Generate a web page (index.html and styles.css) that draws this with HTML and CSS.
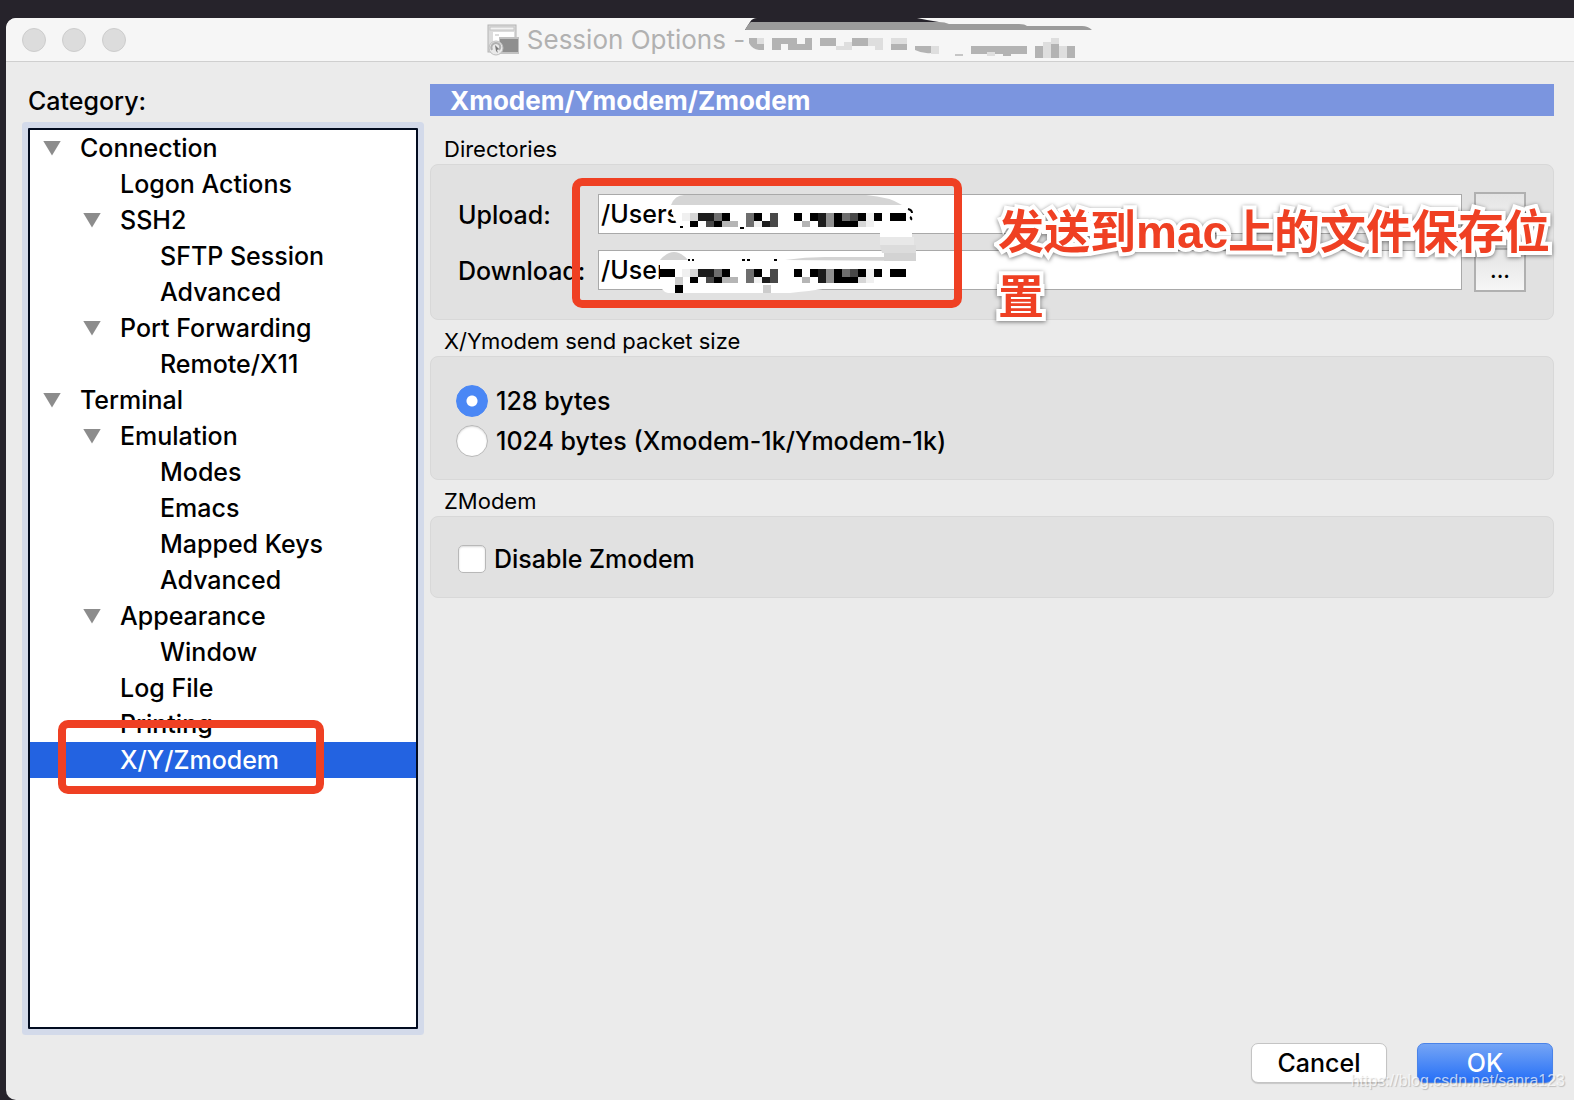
FILE: index.html
```html
<!DOCTYPE html>
<html lang="en">
<head>
    <meta charset="UTF-8">
    <meta name="viewport" content="width=device-width, initial-scale=1.0">
    <title>Session Options</title>
    <link rel="stylesheet" href="styles.css">
</head>
<body>
    <div class="window">
        <!-- Title bar -->
        <header class="titlebar">
            <div class="lights">
                <button class="light" type="button" aria-label="Close"></button>
                <button class="light" type="button" aria-label="Minimize"></button>
                <button class="light" type="button" aria-label="Zoom"></button>
            </div>
            <div class="title">
                <svg class="title-icon" viewBox="0 0 32 32" width="32" height="32">
                    <rect x="1" y="1" width="28" height="27" fill="#dcdcdc" stroke="#b4b4b4"/>
                    <rect x="3" y="3" width="24" height="3" fill="#f2f2f2" stroke="#c4c4c4"/>
                    <path d="M6 8h21v6H12v6H6z" fill="#fff"/>
                    <path d="M8 11h4" stroke="#bbb" stroke-width="1"/>
                    <rect x="12" y="13" width="20" height="17" fill="#c2c2c2"/>
                    <rect x="13" y="15" width="18" height="13" fill="#8f8f8f"/>
                    <circle cx="9" cy="24" r="7" fill="#e9e9e9" stroke="#bdbdbd"/>
                    <path d="M5 26c-2-4 1-7 4-7s6 3 3 7" fill="none" stroke="#b0b0b0" stroke-width="2"/>
                    <path d="M8 21l4 4-2 1 1 3-2-2z" fill="#777"/>
                </svg>
                <h1>Session Options -</h1>
                <svg class="title-mask" viewBox="0 0 350 44" width="350" height="44">
                    <path d="M5 4C7 1 9 0 12 0h160l10 2 12 2-40 8H0z" fill="#26232b"/>
                    <path d="M0 12Q3 6 6 4h188q6 0 10 2h70q6 0 8 2h55q6 0 10 4z" fill="#9b9b9b"/>
                    <g fill="#b3b3b3">
                        <path d="M4 20h15v12h-5q-7-1-10-7zM27 20h25v6h8v-6h7v12H43v-6h-7v6h-9zM75 20h16v8H75zM107 20h16v8h-16zM146 24h16v8h-16zM170 28h16v7q-8 1-16-3zM226 28h56v8h-16v2h-8v-2h-32zM290 28h8v12h-8zM306 24h8v16h-8zM322 28h8v12h-8z"/>
                    </g>
                    <path d="M210 36h8v2h-8z" fill="#c6c6c6"/>
                    <path d="M12 20h7v6h-7zM91 28h8v4h-8zM130 20h8v12h-8zM146 20h8v6h-8zM154 20h8v6h-8zM123 20h8v8h-8zM99 24h8v8h-8zM186 28h8v8h-8zM298 24h8v16h-8zM306 20h8v6h-8zM314 28h8v12h-8zM242 34h8v4h-8z" fill="#dedede"/>
                </svg>
            </div>
        </header>

        <main class="content">
            <!-- Category tree -->
            <nav class="sidebar">
                <h2>Category:</h2>
                <ul class="tree">
                    <li class="level-1 open"><a href="#">Connection</a></li>
                    <li class="level-2"><a href="#">Logon Actions</a></li>
                    <li class="level-2 open"><a href="#">SSH2</a></li>
                    <li class="level-3"><a href="#">SFTP Session</a></li>
                    <li class="level-3"><a href="#">Advanced</a></li>
                    <li class="level-2 open"><a href="#">Port Forwarding</a></li>
                    <li class="level-3"><a href="#">Remote/X11</a></li>
                    <li class="level-1 open"><a href="#">Terminal</a></li>
                    <li class="level-2 open"><a href="#">Emulation</a></li>
                    <li class="level-3"><a href="#">Modes</a></li>
                    <li class="level-3"><a href="#">Emacs</a></li>
                    <li class="level-3"><a href="#">Mapped Keys</a></li>
                    <li class="level-3"><a href="#">Advanced</a></li>
                    <li class="level-2 open"><a href="#">Appearance</a></li>
                    <li class="level-3"><a href="#">Window</a></li>
                    <li class="level-2"><a href="#">Log File</a></li>
                    <li class="level-2"><a href="#">Printing</a></li>
                    <li class="level-2 selected"><a href="#">X/Y/Zmodem</a><span class="mark mark-item"></span></li>
                </ul>
            </nav>

            <!-- Settings -->
            <form class="settings">
                <h2 class="banner">Xmodem/Ymodem/Zmodem</h2>

                <fieldset>
                    <legend>Directories</legend>
                    <div class="group directories">
                        <label for="upload">Upload:</label>
                        <input class="path" id="upload" type="text" value="/Users">
                        <button class="browse" type="button" aria-label="Browse upload folder">...</button>
                        <label for="download">Download:</label>
                        <input class="path" id="download" type="text" value="/User">
                        <button class="browse" type="button" aria-label="Browse download folder">...</button>

                        <svg class="path-mask" viewBox="0 0 260 100" width="260" height="100">
                            <path d="M11 12Q15 2 24 2h182q24 2 36 11v22H24Q13 32 11 12z" fill="#fff"/>
                            <path d="M11 12Q15 2 24 2h182q24 2 36 10z" fill="#d5d5d5"/>
                            <path d="M248 16q4 1 4 4M250 24q2 1 1 3" fill="none" stroke="#000" stroke-width="2"/>
                            <path d="M220 36h32v8h-32z" fill="#fff"/>
                            <path d="M220 44h34v8h-34z" fill="#e8e8e8"/>
                            <path d="M220 52h36v8h-34z" fill="#dcdcdc"/>
                            <path d="M224 60h32v8h-32z" fill="#d3d3d3"/>
                            <path d="M0 68h248v16q-88 13-118 16H8q-8-2-8-12z" fill="#fff"/>
                            <path d="M0 67q14-16 28 0zM125 67q20-3 40-3h91v4z" fill="#d3d3d3"/>
                            <path d="M28 66h2v2h-2zM32 66h2v2h-2zM82 66h3v2h-3zM87 66h3v2h-3zM114 66h3v2h-3zM80 34h4v2h-4zM20 33h3v2h-3z"/>
                            <g id="mosaic">
                                <path d="M62 20h8v8h-8zM30 28h8v6h-8zM54 28h8v6h-8zM94 20h8v8h-8zM134 20h8v8h-8zM150 20h8v8h-8zM174 20h8v14h-8zM182 28h16v6h-16zM198 20h8v8h-8zM214 20h8v8h-8zM230 20h16v8h-16z"/>
                                <path d="M38 20h16v8H38zM102 28h8v6h-8zM158 20h8v14h-8z" fill="#1c1c1c"/>
                                <path d="M46 28h8v6h-8zM110 20h8v14h-8zM190 20h8v8h-8z" fill="#484848"/>
                                <path d="M54 20h8v8h-8zM86 20h8v14h-8zM182 20h8v8h-8z" fill="#6e6e6e"/>
                                <path d="M166 20h8v14h-8z" fill="#909090"/>
                                <path d="M62 28h16v6H62zM142 28h8v6h-8z" fill="#b5b5b5"/>
                                <path d="M30 20h8v8h-8zM198 28h8v6h-8z" fill="#d6d6d6"/>
                                <path d="M22 20h8v8h-8zM94 28h8v6h-8zM206 20h8v14h-8z" fill="#f0f0f0"/>
                            </g>
                            <use href="#mosaic" y="56"/>
                            <path d="M0 76h15v8H0zM15 92h8v8h-8z"/>
                            <path d="M15 84h8v8h-8zM103 92h8v8h-8z" fill="#ccc"/>
                        </svg>
                        <span class="mark mark-paths"></span>
                        <p class="note" lang="zh-CN">发送到mac上的文件保存位置</p>
                    </div>
                </fieldset>

                <fieldset>
                    <legend>X/Ymodem send packet size</legend>
                    <div class="group packet">
                        <label class="choice"><input type="radio" name="packet" checked>128 bytes</label>
                        <label class="choice"><input type="radio" name="packet">1024 bytes (Xmodem-1k/Ymodem-1k)</label>
                    </div>
                </fieldset>

                <fieldset>
                    <legend>ZModem</legend>
                    <div class="group zmodem">
                        <label class="choice"><input type="checkbox">Disable Zmodem</label>
                    </div>
                </fieldset>
            </form>
        </main>

        <footer class="actions">
            <button class="button" type="button">Cancel</button>
            <button class="button primary" type="button">OK</button>
            <span class="watermark">https://blog.csdn.net/sanra123</span>
        </footer>
    </div>
</body>
</html>
```
FILE: styles.css
```css
* {
    box-sizing: border-box;
}

body {
    margin: 0;
    min-height: 100vh;
    display: flex;
    padding: 18px 0 0 6px;
    background: #26232b;
    color: #000;
    font-family: Inter, "Noto Sans CJK SC", sans-serif;
    font-size: 25px;
    font-weight: 500;
}

h1, h2, p, ul {
    margin: 0;
    padding: 0;
}

button, input {
    font: inherit;
    margin: 0;
}

.window {
    flex: 1;
    display: flex;
    flex-direction: column;
    background: #ebebeb;
    border-radius: 10px 0 0 10px;
}

/* Title bar */
.titlebar {
    display: flex;
    align-items: center;
    height: 44px;
    padding-left: 16px;
    background: #f6f6f6;
    border-bottom: 1px solid #cfcfcf;
    border-radius: 10px 0 0 0;
}

.lights {
    display: flex;
    gap: 16px;
}

.light {
    width: 24px;
    height: 24px;
    padding: 0;
    border: 1px solid #cdcdcd;
    border-radius: 50%;
    background: #dcdcdc;
}

.title {
    flex: 1;
    display: flex;
    align-items: center;
    justify-content: center;
    padding-right: 118px;
}

.title h1 {
    margin-left: 8px;
    color: #b1b1b1;
    font-size: 26px;
    font-weight: 400;
    line-height: 44px;
    white-space: nowrap;
}

/* Main area */
.content {
    flex: 1;
    display: flex;
    gap: 12px;
    padding: 22px 20px 0 22px;
}

.sidebar {
    width: 390px;
    display: flex;
    flex-direction: column;
}

.sidebar h2 {
    height: 44px;
    font-size: 25px;
    font-weight: 500;
    line-height: 34px;
}

.tree {
    flex: 1;
    list-style: none;
    background: #fff;
    border: 2px solid #020c20;
    box-shadow: 0 0 0 6px #d3daea;
    border-radius: 1px;
}

.tree li {
    position: relative;
    display: flex;
    align-items: center;
    height: 36px;
}

.tree a {
    color: inherit;
    text-decoration: none;
}

.level-1 {
    padding-left: 50px;
}

.level-2 {
    padding-left: 90px;
}

.level-3 {
    padding-left: 130px;
}

.tree .open::before {
    content: "";
    width: 18px;
    height: 15px;
    margin: 0 19px 0 -37px;
    background: #8c8c8c;
    clip-path: polygon(0 0, 100% 0, 50% 100%);
}

.tree .selected {
    background: #2363e1;
    color: #fff;
}

/* Red outlines */
.mark {
    position: absolute;
    border: 8px solid #ef4023;
    border-radius: 10px;
    z-index: 1;
}

.mark-item {
    left: 28px;
    top: -22px;
    width: 266px;
    height: 74px;
}

.mark-paths {
    left: 141px;
    top: 13px;
    width: 390px;
    height: 130px;
}

/* Settings */
.settings {
    flex: 1;
}

.banner {
    height: 32px;
    padding-left: 20px;
    background: #7b95df;
    color: #fff;
    font-size: 26px;
    font-weight: 700;
    line-height: 34px;
}

fieldset {
    min-width: 0;
    margin: 0;
    padding: 0;
    border: 0;
}

legend {
    height: 36px;
    padding: 0 0 0 14px;
    font-size: 22px;
    font-weight: 400;
    line-height: 42px;
}

.banner + fieldset {
    margin-top: 12px;
}

.group {
    position: relative;
    background: #e1e1e1;
    border: 1px solid #d8d8d8;
    border-radius: 8px;
}

.directories {
    display: grid;
    grid-template-columns: 128px 1fr 52px;
    gap: 12px;
    align-items: center;
    padding: 27px;
}

.directories label {
    line-height: 32px;
    padding-top: 2px;
}

.path {
    width: 100%;
    height: 40px;
    padding: 0 2px;
    border: 1px solid #a9a9a9;
    background: #fff;
    color: #000;
}

.browse {
    height: 44px;
    padding: 0;
    border: 2px solid #b0b0b0;
    background: linear-gradient(#e4e4e4, #f6f6f6);
    font-size: 22px;
}

.path-mask {
    position: absolute;
    left: 229px;
    top: 28px;
}

.note {
    position: absolute;
    left: 567px;
    right: 0;
    top: 35px;
    color: #ef4023;
    font-family: "Liberation Sans", "Noto Sans CJK SC", sans-serif;
    font-size: 46px;
    font-weight: 700;
    line-height: 65px;
    -webkit-text-stroke: 8px #fff;
    stroke-linejoin: round;
    paint-order: stroke fill;
    filter: drop-shadow(0 1px 2px rgba(0, 0, 0, 0.5));
    z-index: 1;
}

.packet {
    padding: 24px 25px 18px;
}

.zmodem {
    padding: 22px 25px 18px;
}

.choice {
    display: flex;
    align-items: center;
    gap: 8px;
    height: 40px;
}

.choice input {
    appearance: none;
    width: 32px;
    height: 32px;
    background: #fff;
    border: 1px solid #b8b8b8;
    border-radius: 50%;
    box-shadow: inset 0 1px 2px rgba(0, 0, 0, 0.15);
}

.choice input[type="radio"]:checked {
    border-color: #4a87f5;
    background: radial-gradient(circle, #fff 5px, #4a87f5 6px);
    box-shadow: none;
}

.choice input[type="checkbox"] {
    width: 28px;
    height: 28px;
    margin-left: 2px;
    border-radius: 5px;
}

/* Bottom buttons */
.actions {
    position: relative;
    display: flex;
    justify-content: flex-end;
    gap: 30px;
    padding: 14px 21px 17px;
}

.button {
    width: 136px;
    height: 40px;
    padding: 0;
    border: 1px solid #c4c4c4;
    border-radius: 7px;
    background: #fff;
    box-shadow: 0 1px 1px rgba(0, 0, 0, 0.15);
    color: #000;
}

.button.primary {
    border-color: #4a83e8;
    background: linear-gradient(#75a5f5, #256ff7);
    color: #fff;
}

.watermark {
    position: absolute;
    right: 9px;
    bottom: 10px;
    color: rgba(255, 255, 255, 0.7);
    font-family: "Liberation Sans", sans-serif;
    font-size: 16px;
    font-weight: 400;
    text-shadow: 1px 1px 1px rgba(0, 0, 0, 0.2);
}
```
